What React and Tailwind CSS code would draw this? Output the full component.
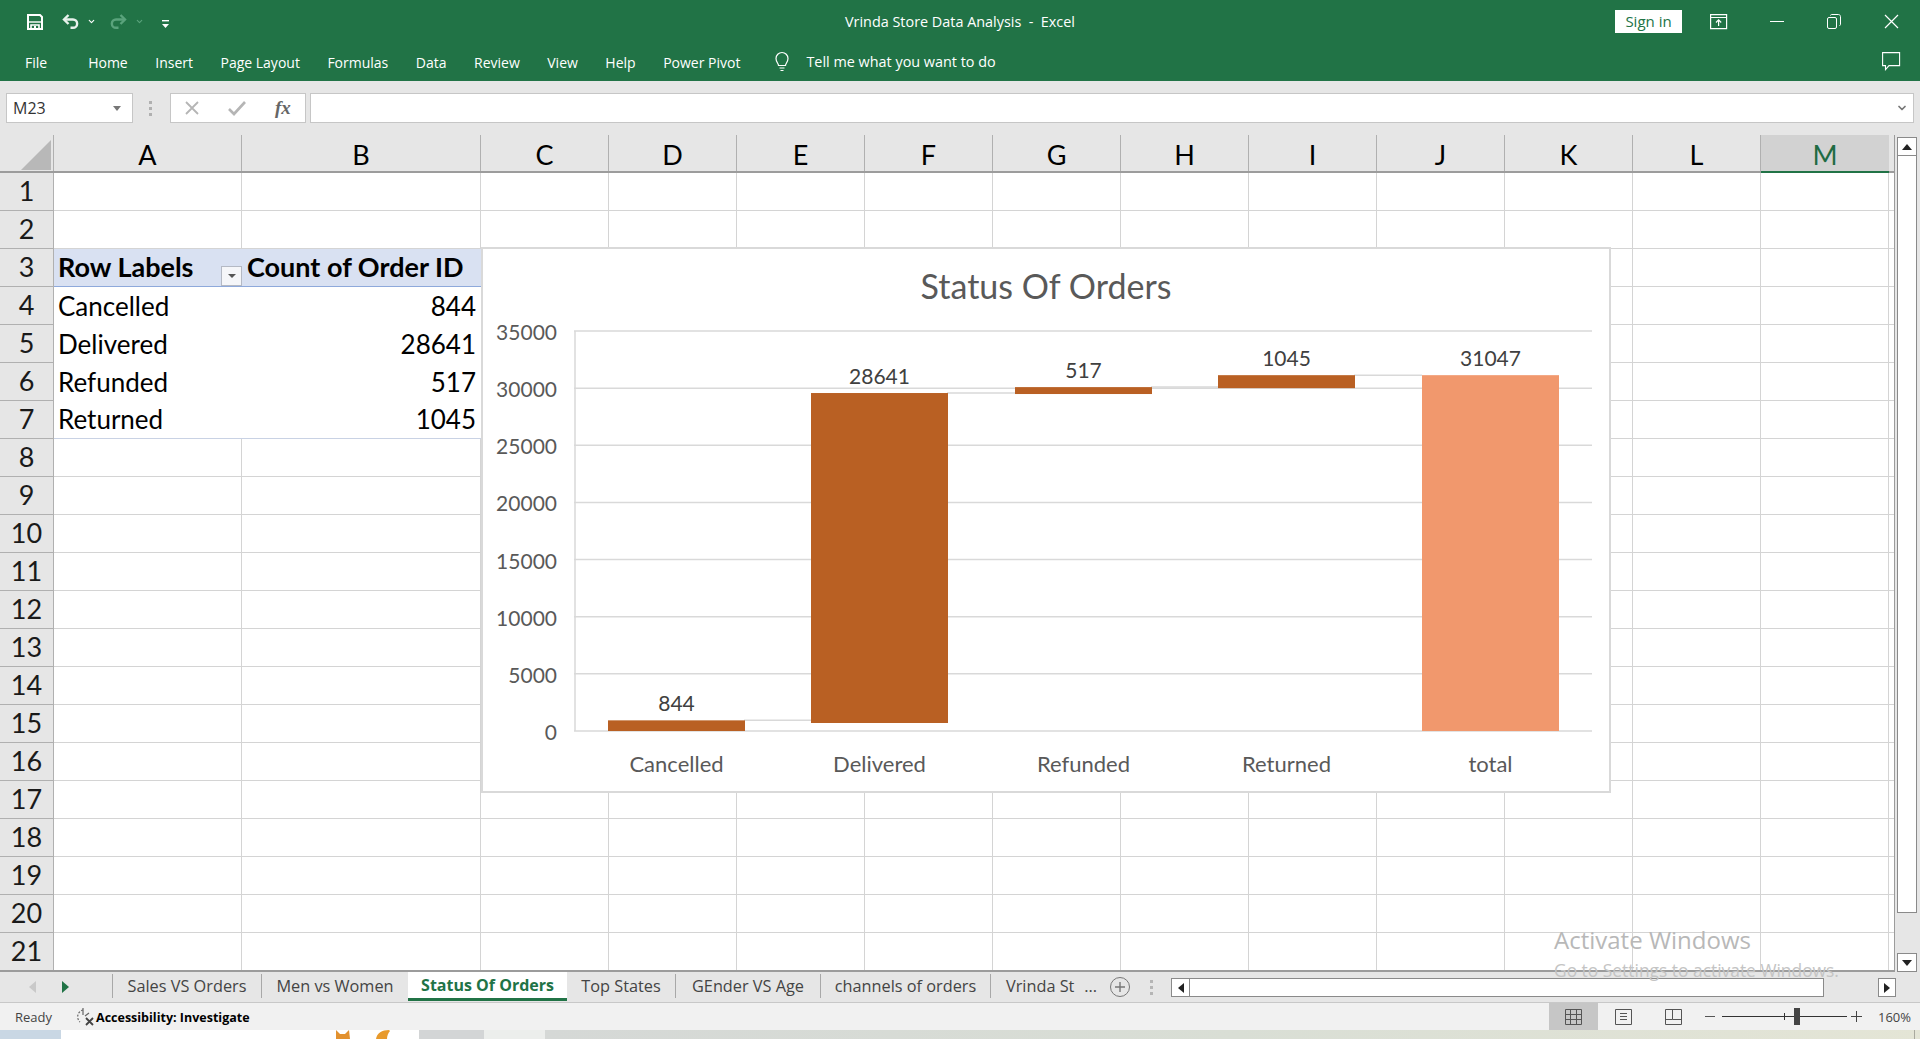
import { ChevronDown } from 'lucide-react';

const font = { ui: 'font-["Open_Sans",sans-serif]', cal: 'font-["Lato",sans-serif]' };

const ribbonTabs = ['Home', 'Insert', 'Page Layout', 'Formulas', 'Data', 'Review', 'View', 'Help', 'Power Pivot'];
const columns = [
  { name: 'A', w: 'w-[188px]' },
  { name: 'B', w: 'w-[239px]' },
  ...['C', 'D', 'E', 'F', 'G', 'H', 'I', 'J', 'K', 'L', 'M'].map((name) => ({ name, w: 'w-[128px]' })),
];
const rows = Array.from({ length: 21 }, (_, i) => i + 1);
const pivot = {
  4: ['Cancelled', '844'],
  5: ['Delivered', '28641'],
  6: ['Refunded', '517'],
  7: ['Returned', '1045'],
};

// chart helpers, coordinates are relative to the chart panel
const y = (v) => 484 - (v * 400) / 35000;
const ticks = [0, 5000, 10000, 15000, 20000, 25000, 30000, 35000];
const bars = [
  { label: 'Cancelled', value: '844', x: 195, from: 0, to: 844, fill: '#b96023' },
  { label: 'Delivered', value: '28641', x: 398, from: 700, to: 29485, fill: '#b96023' },
  { label: 'Refunded', value: '517', x: 602, from: 29485, to: 30002, fill: '#b96023' },
  { label: 'Returned', value: '1045', x: 805, from: 30002, to: 31047, fill: '#b96023' },
  { label: 'total', value: '31047', x: 1009, from: 0, to: 31047, fill: '#f1986d' },
];

const Chart = () => (
  <svg width="1130" height="546" className="block">
    <g stroke="#d9d9d9" strokeWidth="1.5">
      {ticks.map((t) => <line key={t} x1="93" x2="1111" y1={y(t)} y2={y(t)} />)}
      <line x1="94" x2="94" y1={y(35000)} y2={y(0)} />
      {bars.slice(0, -1).map((b, i) => (
        <line key={b.label} x1={b.x + 68} x2={bars[i + 1].x - 68} y1={y(b.to) - 1} y2={y(b.to) - 1} />
      ))}
    </g>
    {bars.map((b) => (
      <rect key={b.label} x={b.x - 68} width="137" y={y(b.to) - 1} height={y(b.from) - y(b.to) + 1} fill={b.fill} />
    ))}
    <text x="565" y="52" textAnchor="middle" fontFamily="Lato, sans-serif" fontSize="34" fill="#595959">Status Of Orders</text>
    <g fontFamily="Lato, sans-serif" fill="#595959">
      {ticks.map((t) => <text key={t} x="76" y={y(t) + 9} fontSize="21" textAnchor="end">{t}</text>)}
      {bars.map((b) => <text key={b.label} x={b.x + 0.5} y="525" fontSize="22" textAnchor="middle">{b.label}</text>)}
    </g>
    <g fontFamily="Lato, sans-serif" fontSize="21" fill="#404040">
      {bars.map((b) => <text key={b.label} x={b.x + 0.5} y={y(b.to) - 10} textAnchor="middle">{b.value}</text>)}
    </g>
  </svg>
);

const TitleIcons = () => (
  <div className="flex items-center text-white">
    <svg width="16" height="16" viewBox="0 0 16 16" fill="none" stroke="white" strokeWidth="2" className="ml-[27px]">
      <path d="M1 1h12l2 2v12H1z" /><path d="M1 8h14" strokeWidth="1.4" /><path d="M4 15v-4h8v4" strokeWidth="1.6" /><rect x="7" y="12" width="2" height="3" fill="white" stroke="none" />
    </svg>
    <svg width="18" height="15" viewBox="0 0 18 15" fill="none" stroke="#e8f2ec" strokeWidth="2.4" className="ml-[19px]">
      <path d="M6.500 1 2 5.500l4.500 4.500" /><path d="M2 5.500h9a4 4 0 0 1 0 8.300H8.500" />
    </svg>
    <ChevronDown size={9} strokeWidth={3} className="ml-[7px] -mr-px" />
    <svg width="19" height="15" viewBox="0 0 19 15" fill="none" stroke="#5aa37c" strokeWidth="2.4" className="ml-[13px]">
      <path d="m12.500 1 4.500 4.500-4.500 4.500" /><path d="M17 5.500H8a4 4 0 0 0 0 8.300h2.500" />
    </svg>
    <ChevronDown size={9} strokeWidth={3} className="ml-[8px] -mr-px text-[#5aa37c]" />
    <svg width="7" height="9" viewBox="0 0 7 9" className="ml-[19px] mt-[5px]" fill="white">
      <rect x="0" y="0" width="7" height="1.4" /><path d="M0 4h7L3.500 8z" />
    </svg>
  </div>
);

const Cell = ({ r, c, i }) => {
  const base = `${c.w} flex items-center text-black ${font.cal}`;
  if (r === 3 && i === 0) {
    return (
      <div className={`${base} relative text-[27px] bg-[#d9e1f2] font-bold px-[4px] border-b border-[#8ea9db]`}>
        Row Labels
        <div className="absolute right-0 bottom-0 w-[21px] h-[20px] bg-[#f5f6f9] border border-[#b4b9c4] flex items-center justify-center">
          <svg width="8" height="5"><path d="M0 0h8L4 4z" fill="#555" /></svg>
        </div>
      </div>
    );
  }
  if (r === 3 && i === 1) {
    return <div className={`${base} text-[27px] bg-[#d9e1f2] font-bold pl-[5px] border-b border-[#8ea9db]`}>Count of Order ID</div>;
  }
  if (pivot[r] && i < 2) {
    return (
      <div className={`${base} text-[26px] pl-[4px] pr-[5px] ${i === 1 ? 'justify-end' : ''} ${r === 7 ? 'border-b border-[#c9d2e4]' : ''}`}>
        {pivot[r][i]}
      </div>
    );
  }
  return <div className={`${c.w} border-r border-b border-[#d4d4d4]`} />;
};

const Grid = () => (
  <div className="flex-1 flex bg-white overflow-hidden relative">
    <div className="w-[1895px] h-full flex flex-col overflow-hidden border-r border-b-2 border-[#9c9c9c]">
      <div className="flex h-[38px] shrink-0 bg-[#e6e6e6] border-b-2 border-[#9c9c9c]">
        <div className="w-[54px] relative border-r border-[#b0b0b0]">
          <svg width="30" height="30" className="absolute left-[21px] top-[5px]"><path d="M30 0v30H0z" fill="#b8b8b8" /></svg>
        </div>
        {columns.map((c) => (
          <div key={c.name} className={`${c.w} flex items-center justify-center pt-[5px] text-[27px] ${font.cal} ${c.name === 'M' ? 'bg-[#d2d2d2] text-[#1f6b43] border-b-2 -mb-0.5 border-[#217346]' : 'text-black border-r border-[#b0b0b0]'}`}>
            {c.name}
          </div>
        ))}
      </div>
      {rows.map((r) => (
        <div key={r} className="flex h-[38px] shrink-0">
          <div className={`w-[54px] bg-[#e6e6e6] border-r border-b border-[#b0b0b0] flex items-center justify-center text-[27px] text-[#1a1a1a] ${font.cal}`}>{r}</div>
          {columns.map((c, i) => (
            <Cell key={c.name} r={r} c={c} i={i} />
          ))}
          <div className="flex-1 border-b border-[#d4d4d4]" />
        </div>
      ))}
    </div>
    <div className="flex-1 bg-[#e6e6e6] flex flex-col items-end pt-[2px] pr-[3px]">
      <div className="w-[20px] h-[19px] bg-white border border-[#8a8a8a] flex items-center justify-center">
        <svg width="10" height="6"><path d="M5 0l5 6H0z" fill="#222" /></svg>
      </div>
      <div className="w-[20px] h-[758px] -mt-px bg-white border border-[#8a8a8a]" />
      <div className="mt-auto w-[20px] h-[19px] bg-white border border-[#8a8a8a] flex items-center justify-center">
        <svg width="10" height="6"><path d="M5 6l5-6H0z" fill="#222" /></svg>
      </div>
    </div>
    <div className="absolute left-[481px] top-[112px] w-[1130px] h-[546px] bg-white border-2 border-[#d9d9d9]">
      <div className="-m-[2px]"><Chart /></div>
    </div>
  </div>
);

const tabs = [
  { name: 'Sales VS Orders', w: 'w-[149px]' },
  { name: 'Men vs Women', w: 'w-[147px]' },
  { name: 'Status Of Orders', w: 'w-[159px]', active: true },
  { name: 'Top States', w: 'w-[108px]', noLine: true },
  { name: 'GEnder VS Age', w: 'w-[145px]' },
  { name: 'channels of orders', w: 'w-[170px]' },
];

const TabBar = () => (
  <div className={`h-[31px] bg-[#e6e6e6] border-b border-[#c8c8c8] flex items-stretch text-[16.3px] text-[#444] ${font.ui}`}>
    <div className="w-[112px] flex items-center pl-[29px] gap-[26px]">
      <svg width="7" height="12"><path d="M7 0v12L0 6z" fill="#c9c9c9" /></svg>
      <svg width="7" height="12"><path d="M0 0v12l7-6z" fill="#217346" /></svg>
    </div>
    {tabs.map((t) => (
      t.active ? (
        <div key={t.name} className={`${t.w} bg-white border-b-[3px] border-[#217346] text-[#217346] font-bold text-[16px] flex items-center justify-center h-[30px] -mt-px`}>{t.name}</div>
      ) : (
        <div key={t.name} className={`${t.w} flex items-center justify-center ${t.noLine ? '' : 'border-l border-[#a8a8a8]'} h-[24px] mt-[2px]`}>{t.name}</div>
      )
    ))}
    <div className="w-[106px] flex items-center pl-[15px] border-l border-[#a8a8a8] h-[24px] mt-[2px] whitespace-nowrap">
      Vrinda St
      <span className="ml-auto mr-[-1px]">...</span>
    </div>
    <div className="flex items-center ml-[14px]">
      <div className="w-[20px] h-[20px] rounded-full border border-[#777] flex items-center justify-center text-[#777]">
        <svg width="12" height="12" stroke="currentColor" strokeWidth="1.4"><path d="M6 1v10M1 6h10" /></svg>
      </div>
    </div>
    <div className="ml-[20px] flex flex-col justify-center gap-[3px]">
      <span className="block w-[3px] h-[3px] bg-[#b5b5b5]" /><span className="block w-[3px] h-[3px] bg-[#b5b5b5]" /><span className="block w-[3px] h-[3px] bg-[#b5b5b5]" />
    </div>
    <div className="ml-[18px] mt-[6px] h-[19px] flex border border-[#8a8a8a]">
      <div className="w-[18px] bg-white border-r border-[#8a8a8a] flex items-center justify-center">
        <svg width="6" height="10"><path d="M6 0v10L0 5z" fill="#222" /></svg>
      </div>
      <div className="w-[633px] bg-white" />
    </div>
    <div className="ml-[54px] mt-[6px] w-[18px] h-[19px] bg-white border border-[#8a8a8a] flex items-center justify-center">
      <svg width="6" height="10"><path d="M0 0v10l6-5z" fill="#222" /></svg>
    </div>
  </div>
);

const StatusBar = () => (
  <div className={`h-[27px] bg-[#f1f1f1] flex items-center text-[13px] text-[#444] ${font.ui}`}>
    <span className="ml-[15px] mt-[3px]">Ready</span>
    <svg width="20" height="20" viewBox="0 0 20 20" fill="none" stroke="#666" strokeWidth="1.2" className="ml-[23px]">
      <path d="M8 3a7 7 0 0 0-3 12" strokeDasharray="2 1.5" /><path d="M8 1v7M14 6l-4 3" /><path d="m11 11 7 7m0-7-7 7" stroke="#444" strokeWidth="1.8" />
    </svg>
    <span className="ml-[1px] mt-[3px] font-bold text-black text-[12.5px]">Accessibility: Investigate</span>
    <div className="ml-auto flex items-center h-full">
      <div className="w-[49px] h-full bg-[#c6c6c6] flex items-center justify-center">
        <svg width="17" height="16" fill="none" stroke="#555"><path d="M.5.5h16v15H.5zM.5 5.5h16M.5 10.5h16M5.5.5v15M11.5.5v15" /></svg>
      </div>
      <div className="w-[50px] flex items-center justify-center">
        <svg width="17" height="16" fill="none" stroke="#555"><path d="M.5.5h16v15H.5zM5 4.5h7M5 7.5h7M5 10.5h7" /></svg>
      </div>
      <div className="w-[50px] flex items-center justify-center">
        <svg width="17" height="16" fill="none" stroke="#555"><path d="M.5.5h16v15H.5zM.5 10.5h7v-10M7.5 10.5h9" /></svg>
      </div>
      <div className="ml-[7px] w-[10px] h-px bg-[#555]" />
      <div className="ml-[7px] w-[125px] h-px bg-[#333] relative">
        <div className="absolute left-[62px] -top-[3px] w-px h-[7px] bg-[#333]" />
        <div className="absolute left-[72px] -top-[8px] w-[6px] h-[17px] bg-[#444]" />
      </div>
      <svg width="11" height="11" stroke="#444" className="ml-[4px]"><path d="M5.500 0v11M0 5.500h11" /></svg>
      <span className="ml-[16px] mr-[11px] w-[31px] mt-[3px]">160%</span>
    </div>
  </div>
);

const Wallpaper = () => (
  <div className="h-[9px] flex overflow-hidden">
    <div className="w-[61px] bg-[#c9d7e4]" />
    <div className="w-[358px] bg-white pl-[273px] flex gap-[22px]">
      <svg width="18" height="9" viewBox="0 0 18 9"><path d="M2 0l4 4h5l4-4 1 9H2z" fill="#e2912f" /></svg>
      <svg width="17" height="9" viewBox="0 0 17 9"><path d="M15 0C8 0 3 3 2 9h11c0-3 1-6 3-8z" fill="#e89a2c" /></svg>
    </div>
    <div className="w-[65px] bg-[#d3d5d6]" />
    <div className="w-[61px] bg-[#eceeec]" />
    <div className="flex-1 bg-gradient-to-r from-[#d5d8d6] via-[#d9ded5] to-[#e4e5d6] flex justify-end">
      <div className="w-px h-full bg-[#a9a99f] mr-[5px]" />
    </div>
  </div>
);

export default function App() {
  return (
    <div className="w-[1920px] h-[1039px] flex flex-col overflow-hidden relative bg-white">
      <div className={`h-[81px] bg-[#217346] text-white ${font.ui}`}>
        <div className="h-[43px] flex items-center relative">
          <TitleIcons />
          <div className="absolute left-[845px] top-[11px] text-[14.4px]">Vrinda Store Data Analysis&nbsp; -&nbsp; Excel</div>
          <div className="ml-auto flex items-center">
            <div className="w-[67px] h-[23px] bg-white text-[#217346] text-[15px] flex items-center justify-center">Sign in</div>
            <svg width="18" height="16" viewBox="0 0 18 16" fill="none" stroke="white" strokeWidth="1.2" className="ml-[28px]">
              <path d="M.6.6h16v14H.6zM.6 3.5h16" /><path d="M8.6 12V6M6 8.5l2.6-2.6 2.6 2.6" />
            </svg>
            <div className="ml-[42px] w-[14px] h-px bg-white" />
            <svg width="14" height="15" viewBox="0 0 14 15" fill="none" stroke="white" className="ml-[43px]">
              <rect x=".5" y="3.5" width="9" height="11" rx="1.5" /><path d="M3.5 1.5c0-.6.5-1 1-1h7c1 0 2 1 2 2v8c0 .6-.4 1-1 1" />
            </svg>
            <svg width="15" height="15" viewBox="0 0 15 15" stroke="white" strokeWidth="1.2" className="ml-[43px] mr-[21px]">
              <path d="m1 1 13 13M14 1 1 14" />
            </svg>
          </div>
        </div>
        <div className="h-[38px] flex items-center text-[14px] relative">
          <span className="ml-[25px] mr-[41px]">File</span>
          <div className="flex gap-[27.5px]">
            {ribbonTabs.map((t) => <span key={t}>{t}</span>)}
          </div>
          <svg width="18" height="22" viewBox="0 0 18 22" fill="none" stroke="white" strokeWidth="1.2" className="ml-[33px]">
            <path d="M5.500 14.500c0-2-2.500-3.500-2.500-7a6 6 0 0 1 12 0c0 3.500-2.500 5-2.500 7zM6.500 17h5M7.500 19.500h3" />
          </svg>
          <span className="ml-[15px] text-[14.4px]">Tell me what you want to do</span>
          <svg width="19" height="19" viewBox="0 0 19 19" fill="none" stroke="white" strokeWidth="1.1" className="absolute left-[1882px] top-[9px]">
            <path d="M.6.600h17v13H7l-3.500 4v-4H.6z" />
          </svg>
        </div>
      </div>
      <div className="h-[54px] bg-[#e6e6e6] flex items-start pt-[12px] relative">
        <div className={`ml-[6px] w-[127px] h-[30px] bg-white border border-[#c6c6c6] flex items-center px-[6px] text-[16px] text-[#333] ${font.ui}`}>
          M23
          <svg width="8" height="5" className="ml-auto mr-[5px]"><path d="M0 0h8L4 5z" fill="#777" /></svg>
        </div>
        <div className="ml-[16px] mt-[8px] flex flex-col gap-[3px]">
          <span className="block w-[3px] h-[3px] bg-[#b0b0b0]" /><span className="block w-[3px] h-[3px] bg-[#b0b0b0]" /><span className="block w-[3px] h-[3px] bg-[#b0b0b0]" />
        </div>
        <div className="ml-[18px] w-[136px] h-[30px] bg-white border border-[#c6c6c6] flex items-center">
          <svg width="16" height="16" viewBox="0 0 16 16" stroke="#b5b5b5" strokeWidth="1.8" className="ml-[13px]"><path d="m2 2 12 12M14 2 2 14" /></svg>
          <svg width="18" height="16" viewBox="0 0 18 16" fill="none" stroke="#b5b5b5" strokeWidth="2.600" className="ml-[28px]"><path d="m1 9 5 5L17 2" /></svg>
          <span className={`ml-[29px] font-["Liberation_Serif",serif] italic font-bold text-[19px] text-[#666]`}>fx</span>
        </div>
        <div className="ml-[4px] w-[1604px] h-[30px] bg-white border border-[#c6c6c6] flex items-center justify-end pr-[5px]">
          <ChevronDown size={12} strokeWidth={3.5} className="text-[#777]" />
        </div>
      </div>
      <Grid />
      <TabBar />
      <StatusBar />
      <Wallpaper />
      <div className={`absolute left-[1554px] top-[925px] text-[24px] leading-[30px] text-[#b8b8b8] ${font.ui}`}>Activate Windows</div>
      <div className={`absolute left-[1554px] top-[958px] text-[17.4px] leading-[24px] text-[#c4c4c4] ${font.ui}`}>Go to Settings to activate Windows.</div>
    </div>
  );
}
